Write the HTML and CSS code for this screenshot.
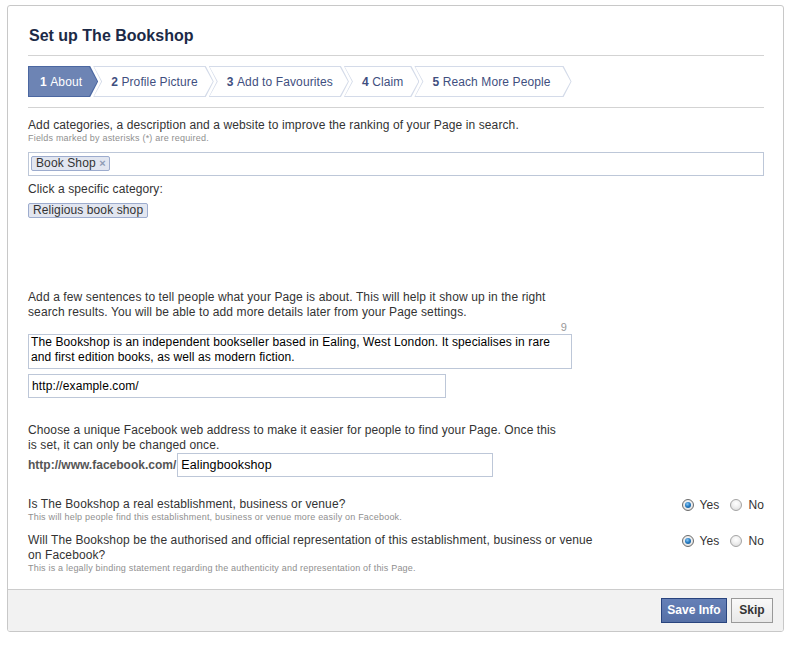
FILE: index.html
```html
<!DOCTYPE html>
<html lang="en">
<head>
<meta charset="utf-8">
<title>Set up The Bookshop</title>
<link rel="stylesheet" href="styles.css">
</head>
<body>
<div class="dialog">
  <div class="dialog-body">
    <h1 class="title">Set up The Bookshop</h1>

    <div class="steps">
      <div class="step step-first step-active"><b>1</b>&nbsp;About</div>
      <div class="step"><b>2</b>&nbsp;Profile Picture</div>
      <div class="step"><b>3</b>&nbsp;Add to Favourites</div>
      <div class="step"><b>4</b>&nbsp;Claim</div>
      <div class="step step-last"><b>5</b>&nbsp;Reach More People</div>
    </div>

    <div class="section categories">
      <p class="text">Add categories, a description and a website to improve the ranking of your Page in search.</p>
      <p class="note">Fields marked by asterisks (*) are required.</p>
      <div class="tag-input">
        <span class="tag">Book Shop <span class="tag-x">×</span></span>
      </div>
      <p class="text label">Click a specific category:</p>
      <div class="suggest-row">
        <span class="suggest">Religious book shop</span>
      </div>
    </div>

    <div class="section about">
      <p class="text para">Add a few sentences to tell people what your Page is about. This will help it show up in the right search results. You will be able to add more details later from your Page settings.</p>
      <div class="counter">9</div>
      <div class="textarea">The Bookshop is an independent bookseller based in Ealing, West London. It specialises in rare and first edition books, as well as modern fiction.</div>
      <div class="field url">http://example.com/</div>
    </div>

    <div class="section address">
      <p class="text para">Choose a unique Facebook web address to make it easier for people to find your Page. Once this is set, it can only be changed once.</p>
      <div class="addr-row">
        <span class="addr-prefix">http://www.facebook.com/</span>
        <div class="field vanity">Ealingbookshop</div>
      </div>
    </div>

    <div class="question q1">
      <div class="q-text">
        <p class="text">Is The Bookshop a real establishment, business or venue?</p>
        <p class="note">This will help people find this establishment, business or venue more easily on Facebook.</p>
      </div>
      <div class="choices">
        <span class="radio checked"></span><span class="choice-label">Yes</span>
        <span class="radio"></span><span class="choice-label">No</span>
      </div>
    </div>

    <div class="question q2">
      <div class="q-text">
        <p class="text">Will The Bookshop be the authorised and official representation of this establishment, business or venue on Facebook?</p>
        <p class="note">This is a legally binding statement regarding the authenticity and representation of this Page.</p>
      </div>
      <div class="choices">
        <span class="radio checked"></span><span class="choice-label">Yes</span>
        <span class="radio"></span><span class="choice-label">No</span>
      </div>
    </div>
  </div>

  <div class="footer">
    <button class="btn btn-primary">Save Info</button>
    <button class="btn btn-default">Skip</button>
  </div>
</div>
</body>
</html>
```

FILE: styles.css
```css
* { box-sizing: border-box; }

body {
  margin: 0;
  padding: 5px 0 0 7px;
  background: #fff;
  font-family: "Liberation Sans", Arial, sans-serif;
  font-size: 12px;
  letter-spacing: 0.11px;
  color: #333;
}

p { margin: 0; }

.dialog {
  width: 777px;
  border: 1px solid #c8c8c8;
  border-radius: 3px;
  background: #fff;
  overflow: hidden;
}

.dialog-body {
  padding: 20px 19px 15px 20px;
}

.title {
  margin: 0;
  font-size: 16px;
  line-height: 20px;
  font-weight: bold;
  letter-spacing: 0;
  color: #1c2a47;
  padding: 0 0 9px 1px;
  border-bottom: 1px solid #d3d3d3;
}

/* Steps */
.steps {
  display: flex;
  margin-top: 10px;
  padding-bottom: 10px;
  border-bottom: 1px solid #d3d3d3;
}

.step {
  position: relative;
  z-index: 0;
  height: 31px;
  display: flex;
  align-items: center;
  padding: 0 16px 0 18px;
  margin-left: -5px;
  color: #3f4f80;
  white-space: nowrap;
}

.step b { font-weight: bold; }

.step::before,
.step::after {
  content: "";
  position: absolute;
  z-index: -1;
  clip-path: polygon(0 0, calc(100% - 8px) 0, 100% 50%, calc(100% - 8px) 100%, 0 100%, 8px 50%);
}

.step::before {
  inset: 0;
  background: #d4dbe9;
}

.step::after {
  inset: 1px;
  background: #fff;
}

.step-first {
  margin-left: 0;
  padding-left: 12px;
}

.step-last { padding-right: 21px; }

.step-first::before,
.step-first::after {
  clip-path: polygon(0 0, calc(100% - 8px) 0, 100% 50%, calc(100% - 8px) 100%, 0 100%);
}

.step-active { color: #fff; }
.step-active::before { background: #4b67a1; }
.step-active::after { background: #6d84b4; }

/* Sections */
.categories { padding-top: 10px; }

.text { line-height: 15px; }

.note {
  font-size: 9px;
  line-height: 11px;
  letter-spacing: 0.2px;
  color: #8f8f8f;
}

.tag-input {
  margin-top: 8px;
  height: 24px;
  border: 1px solid #bdc7d8;
  padding: 3px 2px;
  display: flex;
  align-items: flex-start;
}

.tag {
  display: inline-block;
  height: 15px;
  line-height: 13px;
  padding: 0 3px 0 4px;
  background: #e2e6f0;
  border: 1px solid #9dacce;
  border-radius: 2px;
  color: #333;
}

.tag-x {
  color: #8e9bb5;
  font-weight: bold;
  font-size: 11px;
}

.label { margin-top: 6px; }

.suggest-row {
  display: flex;
  margin-top: 6px;
}

.suggest {
  height: 15px;
  line-height: 13px;
  padding: 0 4px 0 4px;
  background: #e2e6f0;
  border: 1px solid #9dacce;
  border-radius: 2px;
  color: #333;
}

.about { margin-top: 72px; }

.para { max-width: 538px; }

.counter {
  width: 543px;
  height: 14px;
  line-height: 14px;
  text-align: right;
  padding-right: 4px;
  color: #999;
  font-size: 11px;
}

.textarea {
  width: 544px;
  height: 35px;
  border: 1px solid #bdc7d8;
  padding: 0 2px 3px 2px;
  line-height: 15px;
  color: #000;
}

.field {
  height: 24px;
  border: 1px solid #bdc7d8;
  padding: 0 3px;
  line-height: 22px;
  color: #000;
}

.url {
  margin-top: 5px;
  width: 418px;
}

.address { margin-top: 25px; }

.addr-row {
  display: flex;
  align-items: center;
}

.addr-prefix {
  font-weight: bold;
  letter-spacing: 0;
  color: #555;
}

.vanity {
  width: 316px;
  margin-left: 1px;
  font-size: 12.5px;
}

/* Questions */
.question {
  display: flex;
  justify-content: space-between;
  align-items: flex-start;
}

.q1 { margin-top: 20px; }
.q2 { margin-top: 10px; }

.q-text .text { max-width: 578px; }

.choices {
  display: flex;
  align-items: center;
  height: 16px;
}

.radio {
  width: 12px;
  height: 12px;
  border-radius: 50%;
  border: 1px solid #a4a4a4;
  background: radial-gradient(circle at 50% 35%, #ffffff 0%, #f0f0f0 45%, #d5d5d5 100%);
  margin-right: 6px;
  position: relative;
}

.radio + .choice-label + .radio { margin-left: 11px; }

.radio.checked {
  border-color: #6b6b6b;
  background: radial-gradient(circle at 50% 40%, #ffffff 0%, #e8e8e8 60%, #c8c8c8 100%);
}

.radio.checked::after {
  content: "";
  position: absolute;
  left: 2px;
  top: 2px;
  width: 6px;
  height: 6px;
  border-radius: 50%;
  background: radial-gradient(circle at 40% 35%, #8cc8f5 0%, #2a7fc4 45%, #0d4a86 100%);
}

.choice-label {
  color: #333;
  line-height: 15px;
}

/* Footer */
.footer {
  background: #f2f2f2;
  border-top: 1px solid #ccc;
  padding: 8px 10px 8px;
  display: flex;
  justify-content: flex-end;
  gap: 4px;
}

.btn {
  height: 25px;
  font-family: "Liberation Sans", Arial, sans-serif;
  font-size: 12px;
  font-weight: bold;
  letter-spacing: 0;
  line-height: 23px;
  padding: 0;
  margin: 0;
  border-radius: 0;
  white-space: nowrap;
  cursor: pointer;
}

.btn-primary {
  width: 66px;
  color: #fff;
  background: linear-gradient(#6580b7, #5670a6);
  border: 1px solid #29447e;
}

.btn-default {
  width: 42px;
  color: #333;
  background: linear-gradient(#f9f9f9, #e8e8e8);
  border: 1px solid #999;
}
```
